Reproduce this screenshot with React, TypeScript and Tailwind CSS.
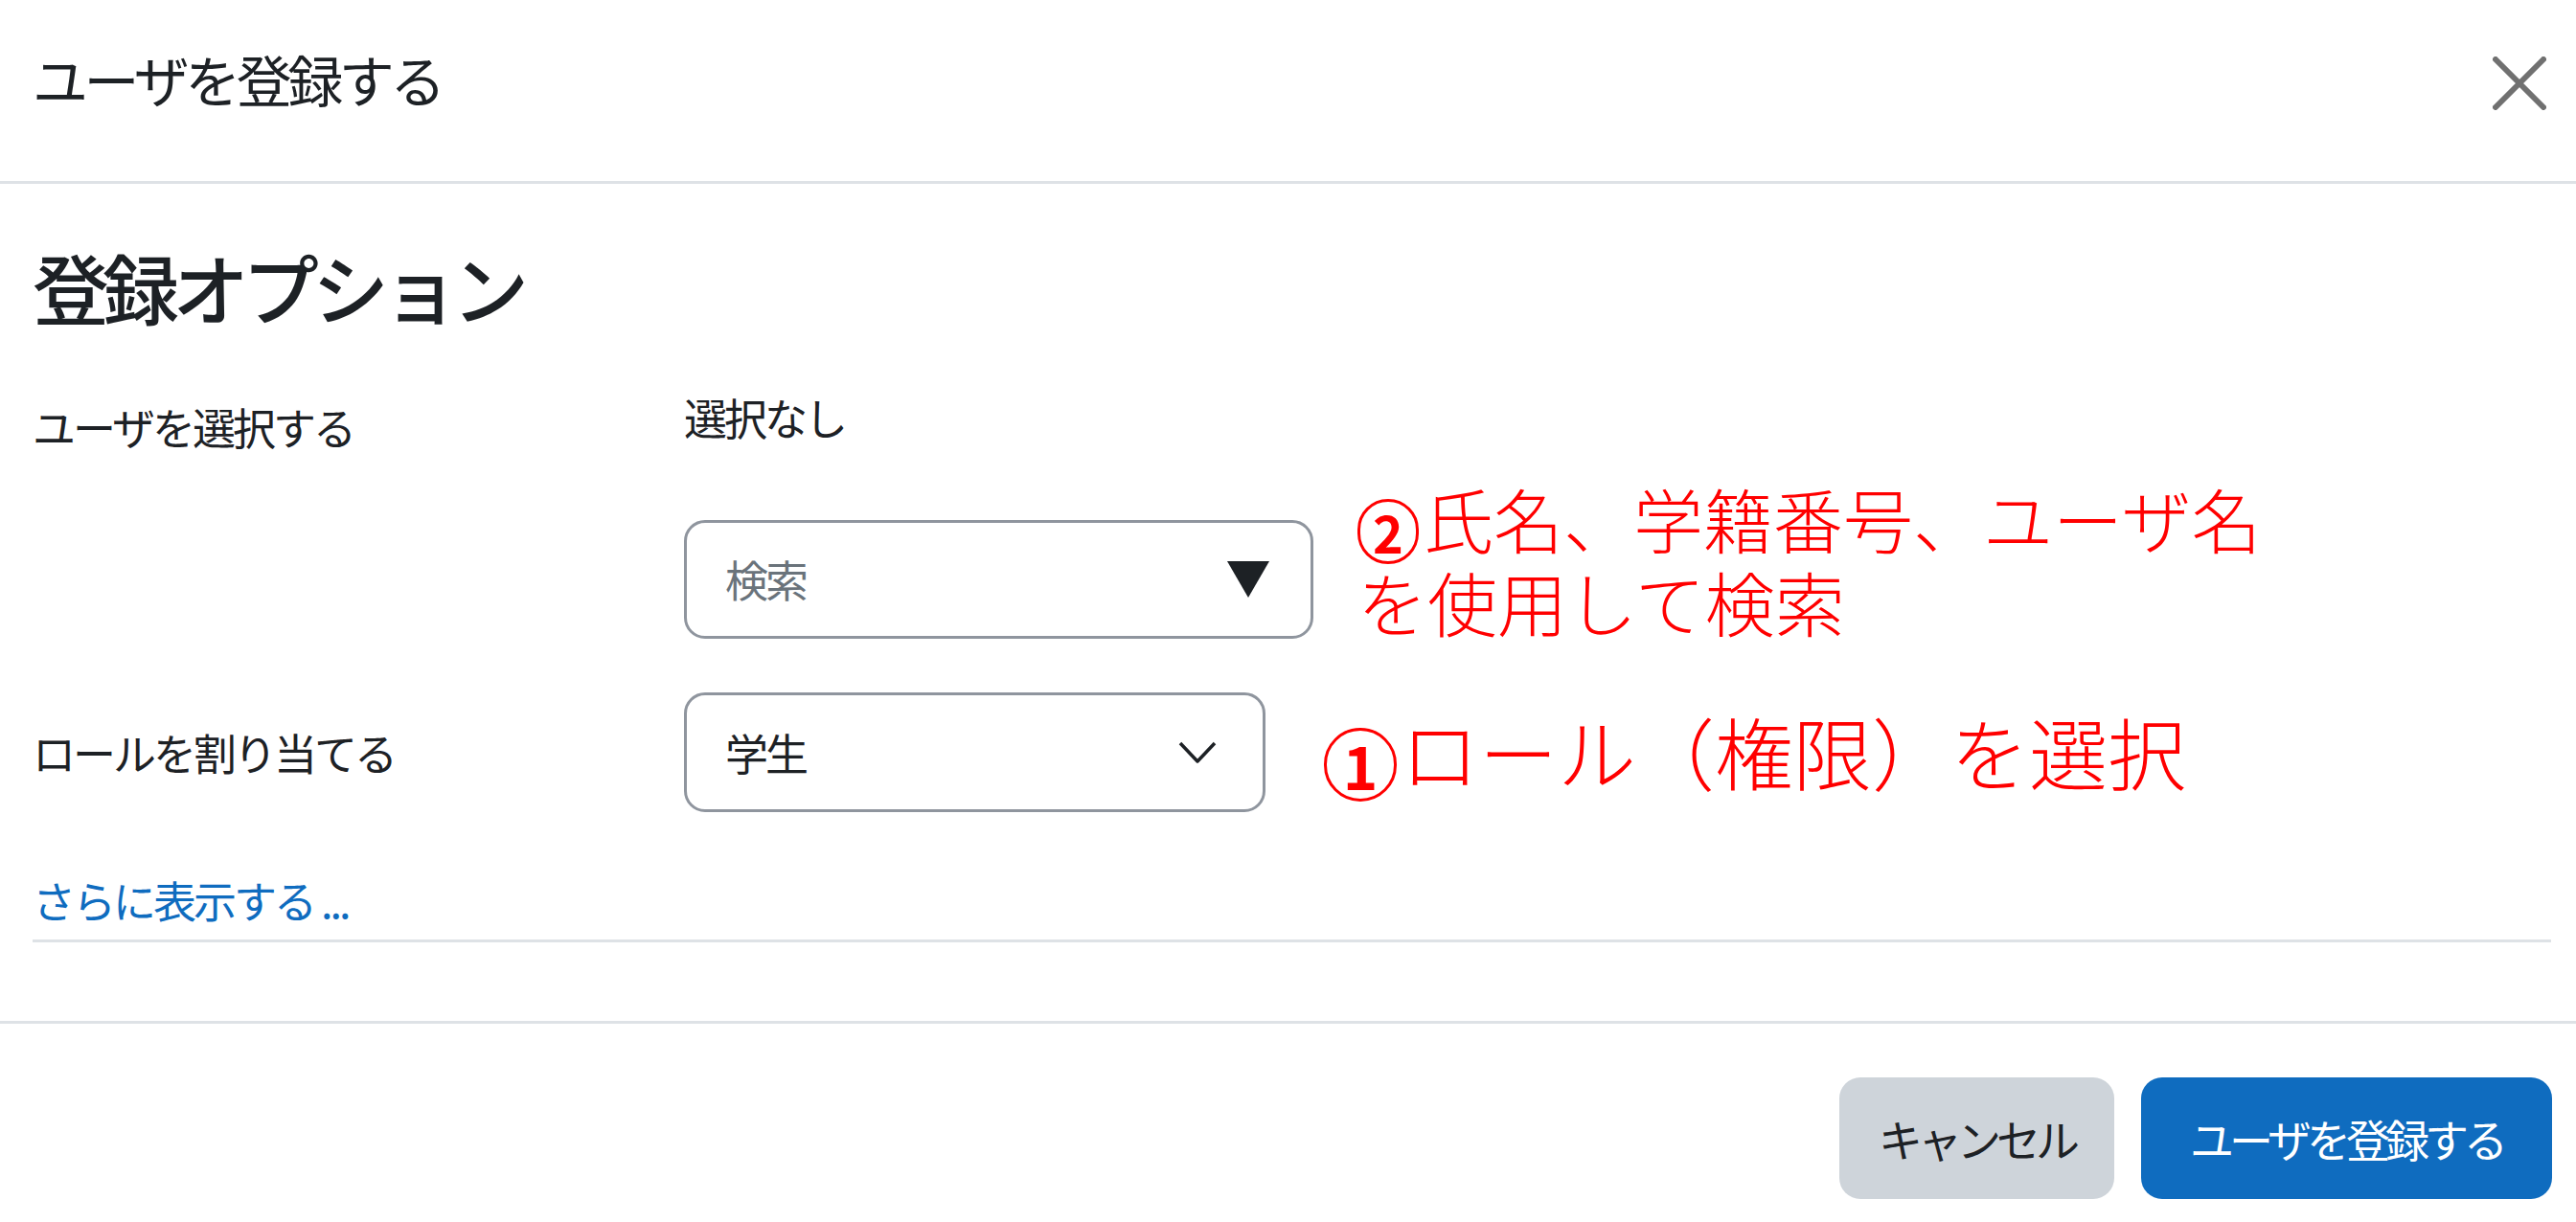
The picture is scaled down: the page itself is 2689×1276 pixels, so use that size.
import { useState } from 'react'

const FONT = '"Noto Sans CJK JP", "Noto Sans", sans-serif'

function CloseIcon() {
  return (
    <svg width="56" height="56" viewBox="0 0 56 56" className="mt-[10px]">
      <path d="M3 3 L53 53 M53 3 L3 53" stroke="#707070" strokeWidth="6" strokeLinecap="round" />
    </svg>
  )
}

function Chevron() {
  return (
    <svg width="40" height="24" viewBox="0 0 40 24">
      <polyline points="2,2 20,21 38,2" fill="none" stroke="#1d2125" strokeWidth="3.5" strokeLinejoin="round" />
    </svg>
  )
}

function Triangle() {
  return (
    <svg width="46" height="40" viewBox="0 0 46 40">
      <polygon points="1,1 45,1 23,39" fill="#1d2125" />
    </svg>
  )
}

// circled number drawn as a bordered circle with a bold digit, like the annotation
function Circled({ n, size }: { n: string; size: 'sm' | 'lg' }) {
  return size === 'sm' ? (
    <span className="inline-flex items-center justify-center w-[64px] h-[68px] ml-[3px] mr-[5px] align-[-6px] rounded-full border-[3px] border-[#ff0000] text-[54px] leading-none font-bold">
      {n}
    </span>
  ) : (
    <span className="inline-flex items-center justify-center w-[76px] h-[77px] mr-[4px] align-[-6px] rounded-full border-[3px] border-[#ff0000] text-[62px] leading-none font-bold">
      {n}
    </span>
  )
}

export default function App() {
  const [role] = useState('学生')

  return (
    <div className="w-[2689px] h-[1276px] bg-white text-[#1d2125] overflow-hidden" style={{ fontFamily: FONT }}>
      <header className="flex items-center justify-between h-[192px] pb-[25px] pl-[34px] pr-[31px] border-b-[3px] border-[#dee2e6]">
        <h1 className="text-[58px] leading-[70px] tracking-[-4.5px] font-normal">ユーザを登録する</h1>
        <CloseIcon />
      </header>

      <div className="pl-[34px] pr-[26px]">
        <h3 className="mt-[56px] text-[80px] leading-[100px] tracking-[-7px] font-medium">登録オプション</h3>

        <div className="flex items-start mt-[58px]">
          <div className="w-[680px] mt-[10px] text-[45px] leading-[60px] tracking-[-3px]">ユーザを選択する</div>
          <div className="flex flex-col">
            <div className="text-[45px] leading-[60px] tracking-[-3px]">選択なし</div>
            <div className="flex items-end mt-[31px]">
              <div className="w-[657px] h-[124px] flex items-center justify-between pl-[40px] pr-[42px] border-[3px] border-[#8f959e] rounded-[22px]">
                <span className="text-[45px] leading-[60px] tracking-[-3px] text-[#6a737b]">検索</span>
                <Triangle />
              </div>
              <div className="ml-[43px] mb-[-4px] text-[73px] leading-[87px] font-light text-[#ff0000]">
                <div className="h-[87px]">
                  <Circled n="2" size="sm" />氏名、学籍番号、ユーザ名
                </div>
                <div className="h-[87px] pl-[3px]">を使用して検索</div>
              </div>
            </div>
          </div>
        </div>

        <div className="flex items-center mt-[56px]">
          <div className="w-[680px] text-[45px] leading-[60px] tracking-[-3px]">ロールを割り当てる</div>
          <div className="w-[607px] h-[125px] flex items-center justify-between pl-[40px] pr-[48px] border-[3px] border-[#8f959e] rounded-[22px]">
            <span className="text-[45px] leading-[60px] tracking-[-3px]">{role}</span>
            <Chevron />
          </div>
          <div className="ml-[61px] text-[82px] leading-[100px] font-light text-[#ff0000]">
            <Circled n="1" size="lg" />ロール（権限）を選択
          </div>
        </div>

        <div className="mt-[62px] pb-[11px] border-b-[3px] border-[#dee2e6]">
          <a className="text-[45px] leading-[60px] tracking-[-3px] text-[#0f6cbf]">さらに表示する ...</a>
        </div>
      </div>

      <footer className="mt-[82px] border-t-[3px] border-[#dee2e6] pt-[56px] pr-[25px] flex justify-end gap-[28px]">
        <button type="button" className="w-[287px] h-[127px] rounded-[22px] bg-[#ced4da] text-[46px] tracking-[-5px] text-[#1d2125]">
          キャンセル
        </button>
        <button type="button" className="w-[429px] h-[127px] rounded-[22px] bg-[#0f6cbf] text-[46px] tracking-[-5px] text-white">
          ユーザを登録する
        </button>
      </footer>
    </div>
  )
}
